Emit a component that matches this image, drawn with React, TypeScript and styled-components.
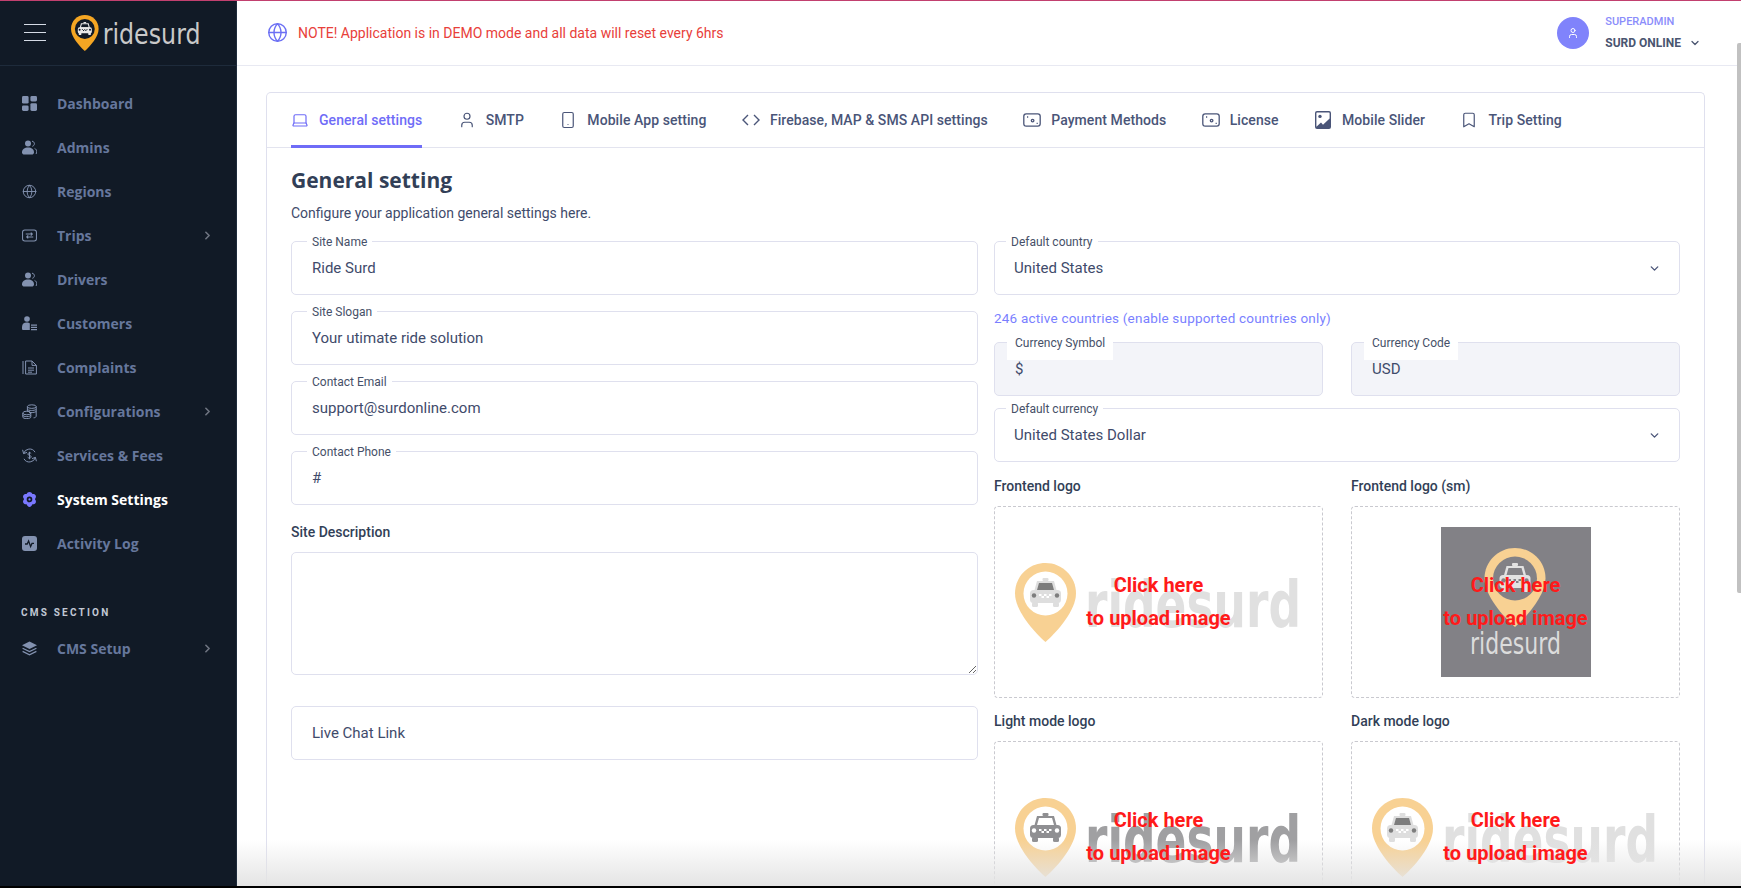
import { FunctionComponent, ReactNode } from "react";
import styled, { createGlobalStyle } from "styled-components";
import {
  Bookmark,
  ChevronDown,
  ChevronRight,
  Globe,
  Laptop,
  Smartphone,
  User,
} from "lucide-react";

const GlobalStyle = createGlobalStyle`
  html, body {
    margin: 0;
    height: 100%;
    overflow: hidden;
    background: #000;
  }
  * {
    box-sizing: border-box;
  }
`;

const Shell = styled.div`
  display: grid;
  grid-template-columns: 237px 1fr;
  height: 886px;
  background: #fff;
  border-top: 1px solid #c2406f;
  font-family: Roboto, "Liberation Sans", sans-serif;
  overflow: hidden;
`;

const Sidebar = styled.aside`
  display: flex;
  flex-direction: column;
  background: #111a26;
  border-right: 1px solid #1e2b3b;
  font-family: "Open Sans", "Noto Sans", sans-serif;
`;

const Brand = styled.div`
  display: flex;
  align-items: center;
  gap: 25px;
  height: 65px;
  padding: 0 0 1px 24px;
  border-bottom: 1px solid #1e2b3b;
`;

const Burger = styled.div`
  display: flex;
  flex-direction: column;
  gap: 6.5px;
  width: 22px;

  span {
    display: block;
    height: 1.5px;
    background: #d5dbe5;
  }
`;

const Nav = styled.nav`
  display: flex;
  flex-direction: column;
  padding-top: 15px;
`;

const NavItem = styled.div<{ $active?: boolean }>`
  display: flex;
  align-items: center;
  height: 44px;
  padding: 0 22px 0 22px;
  gap: 20px;
  font-size: 14px;
  font-weight: 700;
  color: ${(p) => (p.$active ? "#ffffff" : "#66779c")};

  > svg:first-child {
    flex: none;
    width: 15px;
    height: 15px;
    color: ${(p) => (p.$active ? "#7a78ff" : "#8392b0")};
  }
`;

const NavLabel = styled.span`
  flex: 1;
`;

const NavArrow = styled(ChevronRight)`
  width: 13px;
  height: 13px;
  color: #6e7480;
  stroke-width: 3;
`;

const SectionTitle = styled.div`
  padding: 42px 0 3px 21px;
  height: 61px;
  font-family: Roboto, sans-serif;
  font-size: 10px;
  line-height: 12px;
  font-weight: 700;
  letter-spacing: 2.2px;
  color: #c2c8d4;
`;

const Main = styled.main`
  position: relative;
  display: flex;
  flex-direction: column;
  min-width: 0;
  overflow: hidden;
`;

const TopBar = styled.header`
  display: flex;
  align-items: center;
  flex: none;
  height: 65px;
  padding: 0 40px 1px 30px;
  border-bottom: 1px solid #e8e9f2;
`;

const Notice = styled.div`
  display: flex;
  flex: 1;
  align-items: center;
  gap: 10px;
  font-size: 14px;
  color: #e8403a;

  svg {
    width: 21px;
    height: 21px;
    color: #6c70f4;
  }
`;

const Avatar = styled.div`
  display: flex;
  align-items: center;
  justify-content: center;
  width: 32px;
  height: 32px;
  margin-right: 16px;
  border-radius: 50%;
  background: #8083fb;
  color: #fff;

  svg {
    width: 12px;
    height: 12px;
  }
`;

const UserBlock = styled.div`
  display: flex;
  flex-direction: column;
  gap: 8px;
`;

const UserRole = styled.div`
  font-size: 11px;
  line-height: 12px;
  font-weight: 500;
  color: #8b8dfb;
`;

const UserName = styled.div`
  display: flex;
  align-items: center;
  gap: 8px;
  font-size: 12px;
  line-height: 14px;
  font-weight: 700;
  color: #4a5570;

  svg {
    width: 12px;
    height: 12px;
    stroke-width: 2.5;
  }
`;

const Scrollbar = styled.div`
  position: absolute;
  top: 42px;
  right: 0;
  width: 4px;
  height: 550px;
  background: #c1c1c1;
  border-radius: 2px 0 0 2px;
`;

const BottomFade = styled.div`
  position: absolute;
  left: 0;
  right: 0;
  bottom: 0;
  height: 46px;
  background: linear-gradient(rgba(230, 230, 230, 0), #e4e4e4);
  pointer-events: none;
`;

const Content = styled.div`
  flex: 1;
  padding: 26px 36px 0 29px;
`;

const Card = styled.section`
  border: 1px solid #dfe0ee;
  border-bottom: 0;
  border-radius: 5px 5px 0 0;
`;

const Tabs = styled.div`
  display: flex;
  gap: 35.4px;
  height: 55px;
  padding: 0 24px;
  border-bottom: 1px solid #e3e4ef;
`;

const Tab = styled.div<{ $active?: boolean }>`
  display: flex;
  align-items: center;
  gap: 10px;
  height: 55px;
  padding-top: 1px;
  font-size: 14px;
  font-weight: 500;
  letter-spacing: 0.07px;
  white-space: nowrap;
  color: ${(p) => (p.$active ? "#6f6cf7" : "#4a5578")};
  border-bottom: 3px solid ${(p) => (p.$active ? "#6f6cf7" : "transparent")};

  svg {
    flex: none;
    width: 18px;
    height: 18px;
  }
`;

const Body = styled.div`
  padding: 17px 25px 0 24px;
`;

const Heading = styled.h2`
  margin: 0;
  font-family: "Open Sans", sans-serif;
  font-size: 21px;
  line-height: 30px;
  font-weight: 700;
  color: #323f57;
`;

const Intro = styled.p`
  margin: 8px 0 18px;
  font-size: 14px;
  line-height: 20px;
  color: #3f4b6b;
`;

const Columns = styled.div`
  display: grid;
  grid-template-columns: 687px 686px;
  column-gap: 16px;
`;

const Column = styled.div`
  display: flex;
  flex-direction: column;
`;

const FieldStack = styled.div`
  display: flex;
  flex-direction: column;
  gap: 16px;
`;

const Field = styled.div<{ $disabled?: boolean }>`
  position: relative;
  display: flex;
  align-items: center;
  justify-content: space-between;
  height: 54px;
  padding: 0 20px;
  border: 1px solid #dfe0ee;
  border-radius: 5px;
  background: ${(p) => (p.$disabled ? "#f3f4f9" : "#fff")};
  font-size: 15px;
  color: #3f4b6b;
`;

const FieldLabel = styled.span`
  position: absolute;
  top: -7px;
  left: 15px;
  padding: 0 5px;
  background: #fff;
  font-size: 12px;
  line-height: 14px;
  letter-spacing: 0;
  color: #465068;
`;

const BoxedLabel = styled(FieldLabel)`
  left: 12px;
  padding: 0 8px 10px;
`;

const SelectField = styled(Field)`
  padding: 0 18px 0 19px;
`;

const SelectLabel = styled(FieldLabel)`
  left: 11px;
`;

const SelectArrow = styled(ChevronDown)`
  width: 13px;
  height: 13px;
  color: #4a5578;
  stroke-width: 2.5;
`;

const BlockLabel = styled.div<{ $top: number }>`
  margin-top: ${(p) => p.$top}px;
  margin-bottom: 10px;
  font-size: 14px;
  line-height: 20px;
  font-weight: 500;
  color: #323f57;
`;

const TextArea = styled.textarea`
  display: block;
  width: 100%;
  height: 123px;
  margin-bottom: 31px;
  border: 1px solid #dfe0ee;
  border-radius: 5px;
  background: #fff;
  outline: none;
`;

const CountryNote = styled.div`
  margin: 14px 0 15px;
  font-size: 13.5px;
  line-height: 18px;
  letter-spacing: 0.2px;
  color: #7a7fff;
`;

const Pair = styled.div`
  display: grid;
  grid-template-columns: 329px 329px;
  justify-content: space-between;
`;

const CurrencySelect = styled.div`
  margin-top: 12px;
`;

const LogoCell = styled.div`
  display: flex;
  flex-direction: column;
`;

const UploadBox = styled.div`
  position: relative;
  display: flex;
  align-items: center;
  justify-content: center;
  height: 192px;
  border: 1px dashed #c9c9cf;
  border-radius: 4px;
`;

const UploadHint = styled.div`
  position: absolute;
  z-index: 2;
  top: 62px;
  left: 0;
  right: 0;
  text-align: center;
  font-size: 20px;
  line-height: 33px;
  font-weight: 700;
  color: #ff1a1a;
`;

const SmallLogoTile = styled.div`
  display: flex;
  width: 150px;
  height: 150px;
  background: #828186;
`;

const WordMark = styled.text<{ $weight: number }>`
  font-family: "DejaVu Sans", sans-serif;
  font-weight: ${(p) => p.$weight};
`;

type PinColors = {
  pin: string;
  hole: string;
  car: string;
  glass: string;
};

const Pin: FunctionComponent<PinColors> = ({ pin, hole, car, glass }) => (
  <g>
    <path
      d="M30.5 0C47.5 0 61 13.5 61 30.5C61 47 43 68 30.5 79C18 68 0 47 0 30.5C0 13.5 13.5 0 30.5 0Z"
      fill={pin}
    />
    <circle cx="30.5" cy="30.5" r="22" fill={hole} />
    <rect x="27.5" y="15" width="6" height="3" rx="1" fill={car} />
    <path d="M22 18H39L42 29H19Z" fill={car} />
    <path d="M24 20H37L39 27H22Z" fill={glass} />
    <rect x="15" y="27" width="31" height="13" rx="3.5" fill={car} />
    <rect x="17" y="39" width="6" height="5" rx="1.5" fill={car} />
    <rect x="38" y="39" width="6" height="5" rx="1.5" fill={car} />
    <circle cx="19" cy="32.5" r="2.2" fill={glass} />
    <circle cx="42" cy="32.5" r="2.2" fill={glass} />
    <path
      d="M24 31h2.5v2H24zM29 31h2.5v2H29zM34 31h2.5v2H34zM26.5 33H29v2h-2.5zM31.5 33H34v2h-2.5z"
      fill={hole}
    />
  </g>
);

type LogoProps = PinColors & {
  word: string;
  width: number;
  height: number;
  weight?: number;
};

const Logo: FunctionComponent<LogoProps> = ({ word, width, height, weight = 700, ...pin }) => (
  <svg
    width={width}
    height={height}
    viewBox="0 0 287 79"
    fill="none"
    overflow="visible"
  >
    <Pin {...pin} />
    <WordMark
      $weight={weight}
      x="70"
      y="64"
      fontSize="64"
      fill={word}
      textLength="216"
      lengthAdjust="spacingAndGlyphs"
    >
      ridesurd
    </WordMark>
  </svg>
);

const SmallLogo: FunctionComponent = () => (
  <SmallLogoTile>
    <svg
      width="150"
      height="150"
      viewBox="0 0 150 150"
      fill="none"
      overflow="visible"
    >
      <g transform="translate(43.5 21)">
        <Pin
          pin="#f8d193"
          hole="#828186"
          car="#e2e2e2"
          glass="#828186"
        />
      </g>
      <WordMark
        $weight={400}
        x="29"
        y="127"
        fontSize="30"
        fill="#dcdcdc"
        textLength="91"
        lengthAdjust="spacingAndGlyphs"
      >
        ridesurd
      </WordMark>
    </svg>
  </SmallLogoTile>
);

const IconDashboard = () => (
  <svg viewBox="0 0 15 15" fill="currentColor">
    <rect x="0" y="0" width="6.6" height="7.6" rx="1.4" />
    <rect x="8.4" y="0" width="6.6" height="5.4" rx="1.4" />
    <rect x="0" y="9.4" width="6.6" height="5.6" rx="1.4" />
    <rect x="8.4" y="7.2" width="6.6" height="7.8" rx="1.4" />
  </svg>
);

const IconUsers = () => (
  <svg viewBox="0 0 15 15" fill="currentColor">
    <circle cx="6" cy="3.6" r="3" />
    <path d="M0 12.2C0 9 2.6 7.4 6 7.4s6 1.6 6 4.8c0 1.6-1 2.4-2.4 2.4H2.4C1 14.6 0 13.8 0 12.2Z" />
    <path
      d="M10 1.2c1.6.3 2.4 1.3 2.4 2.5S11.6 6 10.4 6.3M12.6 8.4c1.4.6 2.2 1.9 2.2 3.4 0 1-.3 1.7-.9 2.2"
      fill="none"
      stroke="currentColor"
      strokeWidth="1"
    />
  </svg>
);

const IconTrips = () => (
  <svg
    viewBox="0 0 16 15"
    fill="none"
    stroke="currentColor"
    strokeWidth="1.1"
  >
    <rect x="0.6" y="1.6" width="14.8" height="11.8" rx="2.4" />
    <path d="M4 6h7M9.4 4.4 11 6 9.4 7.6M12 9H5M6.6 7.4 5 9l1.6 1.6" />
  </svg>
);

const IconCustomers = () => (
  <svg viewBox="0 0 15 15" fill="currentColor">
    <circle cx="5" cy="3" r="2.8" />
    <path d="M0 11c0-3 2-4.4 4.6-4.4 1.6 0 2.6.4 3.2 1V14H1.4C.5 14 0 13.4 0 12.4Z" />
    <path d="M9 8.6h6v1.2H9zM9 10.8h6V12H9zM9 13h6v1.2H9z" />
  </svg>
);

const IconComplaints = () => (
  <svg
    viewBox="0 0 15 15"
    fill="none"
    stroke="currentColor"
    strokeWidth="1"
  >
    <path d="M1 1v13" />
    <path d="M3.6 14V1h6.4l4.4 4.4V14Z" />
    <path d="M10 1v4.4h4.4M6 8h6M6 10.2h6M6 12.2h4" />
  </svg>
);

const IconCoins = () => (
  <svg
    viewBox="0 0 15 15"
    fill="none"
    stroke="currentColor"
    strokeWidth="1"
  >
    <ellipse cx="9.8" cy="2.6" rx="4.4" ry="1.8" />
    <path d="M5.4 2.6v5M14.2 2.6v9.4c0 1-1 1.8-2.6 1.8" />
    <path d="M5.6 5.6c.8 1 6.6 1.4 8.6-.2M7 8.4c2 .4 5.8.2 7.2-.8" />
    <ellipse cx="4.8" cy="9" rx="4" ry="1.8" />
    <path d="M.8 9v4c0 1 1.6 1.6 4 1.6s4-.6 4-1.6V9M.8 11c0 1 1.6 1.6 4 1.6s4-.6 4-1.6" />
  </svg>
);

const IconServices = () => (
  <svg
    viewBox="0 0 15 15"
    fill="none"
    stroke="currentColor"
    strokeWidth="1"
  >
    <path d="M1.6 5.6A6.2 6.2 0 0 1 13 4.2M.6 1.8l1 3.8 3.4-1.2" />
    <path d="M13.4 9.4A6.2 6.2 0 0 1 2 10.8M14.4 13.2l-1-3.8-3.4 1.2" />
    <path d="M9.2 5.6c-.5-.6-1-.8-1.7-.8-.9 0-1.6.5-1.6 1.3 0 1.8 3.3.9 3.3 2.7 0 .8-.7 1.3-1.7 1.3-.7 0-1.3-.3-1.8-.9M7.5 3.8v7.4" />
  </svg>
);

const IconFlower = () => (
  <svg viewBox="0 0 15 15" fill="currentColor">
    <path
      fillRule="evenodd"
      d="M7.5 0c1.4 0 2.4.9 2.9 2 1.2-.2 2.5.1 3.2 1.3.7 1.2.3 2.5-.5 3.4-.1.3-.1.6 0 .9.8.9 1.2 2.2.5 3.4-.7 1.2-2 1.5-3.2 1.3C9.9 13.4 8.9 15 7.5 15S5.1 13.4 4.6 12.3c-1.2.2-2.5-.1-3.2-1.3-.7-1.2-.3-2.5.5-3.4.1-.3.1-.6 0-.9-.8-.9-1.2-2.2-.5-3.4C2.1 2.1 3.4 1.8 4.6 2 5.1.9 6.1 0 7.5 0Zm0 4.6a2.8 2.8 0 1 0 0 5.6 2.8 2.8 0 0 0 0-5.6Z"
    />
    <circle cx="7.5" cy="7.4" r="1.1" />
  </svg>
);

const IconActivity = () => (
  <svg viewBox="0 0 15 15">
    <rect width="15" height="15" rx="3" fill="currentColor" />
    <path
      d="M3 8h2.2l1.4-3 2 5.6L10 7.4h2"
      fill="none"
      stroke="#111a26"
      strokeWidth="1.3"
    />
  </svg>
);

const IconLayers = () => (
  <svg viewBox="0 0 15 15" fill="currentColor">
    <path d="M7.5.6 15 4.2 7.5 8 0 4.2Z" />
    <path
      d="M.6 7.2l6.9 3.4 6.9-3.4M.6 10.4l6.9 3.5 6.9-3.5"
      fill="none"
      stroke="currentColor"
      strokeWidth="1.2"
    />
  </svg>
);

const IconCode = () => (
  <svg
    viewBox="0 0 18 18"
    fill="none"
    stroke="currentColor"
    strokeWidth="1.4"
  >
    <path d="M6 4 1 9l5 5M12 4l5 5-5 5" />
  </svg>
);

const IconPayment = () => (
  <svg
    viewBox="0 0 18 18"
    fill="none"
    stroke="currentColor"
    strokeWidth="1.3"
  >
    <rect x="0.8" y="2.8" width="16.4" height="12.4" rx="2.4" />
    <circle cx="9.6" cy="9.6" r="1.3" />
    <path d="M4 6h1.2M13.6 12.4h1.2" />
  </svg>
);

const IconImage = () => (
  <svg viewBox="0 0 18 18" fill="currentColor">
    <path
      fillRule="evenodd"
      d="M3 0h12a2 2 0 0 1 2 2v14a2 2 0 0 1-2 2H3a2 2 0 0 1-2-2V2a2 2 0 0 1 2-2Zm0 1.6a.6.6 0 0 0-.6.6v13.6L7 11.4l2 2.4 6.6-6.2V2.2a.6.6 0 0 0-.6-.6Z"
    />
    <circle cx="6" cy="5.4" r="1.7" />
  </svg>
);

type MenuEntry = {
  label: string;
  icon: ReactNode;
  arrow?: boolean;
  active?: boolean;
};

const mainMenu: MenuEntry[] = [
  { label: "Dashboard", icon: <IconDashboard /> },
  { label: "Admins", icon: <IconUsers /> },
  { label: "Regions", icon: <Globe strokeWidth={1.5} /> },
  { label: "Trips", icon: <IconTrips />, arrow: true },
  { label: "Drivers", icon: <IconUsers /> },
  { label: "Customers", icon: <IconCustomers /> },
  { label: "Complaints", icon: <IconComplaints /> },
  { label: "Configurations", icon: <IconCoins />, arrow: true },
  { label: "Services & Fees", icon: <IconServices /> },
  { label: "System Settings", icon: <IconFlower />, active: true },
  { label: "Activity Log", icon: <IconActivity /> },
];

const tabs: { label: string; icon: ReactNode; active?: boolean }[] = [
  { label: "General settings", icon: <Laptop strokeWidth={1.6} />, active: true },
  { label: "SMTP", icon: <User strokeWidth={1.6} /> },
  { label: "Mobile App setting", icon: <Smartphone strokeWidth={1.6} /> },
  { label: "Firebase, MAP & SMS API settings", icon: <IconCode /> },
  { label: "Payment Methods", icon: <IconPayment /> },
  { label: "License", icon: <IconPayment /> },
  { label: "Mobile Slider", icon: <IconImage /> },
  { label: "Trip Setting", icon: <Bookmark strokeWidth={1.6} /> },
];

const leftFields = [
  { label: "Site Name", value: "Ride Surd" },
  { label: "Site Slogan", value: "Your utimate ride solution" },
  { label: "Contact Email", value: "support@surdonline.com" },
  { label: "Contact Phone", value: "#" },
];

const paleCar = { pin: "#f8d193", hole: "#fff", car: "#dedede", glass: "#7d7d7d" };
const darkCar = { pin: "#f8d193", hole: "#fff", car: "#8f8f92", glass: "#fff" };

const UploadLogo: FunctionComponent<{ title: string; top: number; children: ReactNode }> = (props) => (
  <LogoCell>
    <BlockLabel $top={props.top}>{props.title}</BlockLabel>
    <UploadBox>
      {props.children}
      <UploadHint>
        Click here
        <br />
        to upload image
      </UploadHint>
    </UploadBox>
  </LogoCell>
);

export default function App() {
  return (
    <>
      <GlobalStyle />
      <Shell>
        <Sidebar>
          <Brand>
            <Burger>
              <span />
              <span />
              <span />
            </Burger>
            <Logo
              pin="#f5a623"
              hole="#111a26"
              car="#e8e8e8"
              glass="#111a26"
              word="#c9c9c9"
              weight={400}
              width={130}
              height={36}
            />
          </Brand>
          <Nav>
            {mainMenu.map((m) => (
              <NavItem
                key={m.label}
                $active={m.active}
              >
                {m.icon}
                <NavLabel>{m.label}</NavLabel>
                {m.arrow && <NavArrow />}
              </NavItem>
            ))}
            <SectionTitle>CMS SECTION</SectionTitle>
            <NavItem>
              <IconLayers />
              <NavLabel>CMS Setup</NavLabel>
              <NavArrow />
            </NavItem>
          </Nav>
        </Sidebar>
        <Main>
          <TopBar>
            <Notice>
              <Globe strokeWidth={1.6} />
              NOTE! Application is in DEMO mode and all data will reset every 6hrs
            </Notice>
            <Avatar>
              <User strokeWidth={2} />
            </Avatar>
            <UserBlock>
              <UserRole>SUPERADMIN</UserRole>
              <UserName>
                SURD ONLINE
                <ChevronDown />
              </UserName>
            </UserBlock>
          </TopBar>
          <Content>
            <Card>
              <Tabs>
                {tabs.map((t) => (
                  <Tab
                    key={t.label}
                    $active={t.active}
                  >
                    {t.icon}
                    {t.label}
                  </Tab>
                ))}
              </Tabs>
              <Body>
                <Heading>General setting</Heading>
                <Intro>Configure your application general settings here.</Intro>
                <Columns>
                  <Column>
                    <FieldStack>
                      {leftFields.map((f) => (
                        <Field key={f.label}>
                          <FieldLabel>{f.label}</FieldLabel>
                          {f.value}
                        </Field>
                      ))}
                    </FieldStack>
                    <BlockLabel $top={17}>Site Description</BlockLabel>
                    <TextArea />
                    <Field>Live Chat Link</Field>
                  </Column>
                  <Column>
                    <SelectField>
                      <SelectLabel>Default country</SelectLabel>
                      United States
                      <SelectArrow />
                    </SelectField>
                    <CountryNote>246 active countries (enable supported countries only)</CountryNote>
                    <Pair>
                      <Field $disabled>
                        <BoxedLabel>Currency Symbol</BoxedLabel>$
                      </Field>
                      <Field $disabled>
                        <BoxedLabel>Currency Code</BoxedLabel>USD
                      </Field>
                    </Pair>
                    <CurrencySelect>
                      <SelectField>
                        <SelectLabel>Default currency</SelectLabel>
                        United States Dollar
                        <SelectArrow />
                      </SelectField>
                    </CurrencySelect>
                    <Pair>
                      <UploadLogo
                        title="Frontend logo"
                        top={14}
                      >
                        <Logo
                          {...paleCar}
                          word="#e0e0e0"
                          width={287}
                          height={79}
                        />
                      </UploadLogo>
                      <UploadLogo
                        title="Frontend logo (sm)"
                        top={14}
                      >
                        <SmallLogo />
                      </UploadLogo>
                      <UploadLogo
                        title="Light mode logo"
                        top={13}
                      >
                        <Logo
                          {...darkCar}
                          word="#a0a0a2"
                          width={287}
                          height={79}
                        />
                      </UploadLogo>
                      <UploadLogo
                        title="Dark mode logo"
                        top={13}
                      >
                        <Logo
                          {...paleCar}
                          word="#e0e0e0"
                          width={287}
                          height={79}
                        />
                      </UploadLogo>
                    </Pair>
                  </Column>
                </Columns>
              </Body>
            </Card>
          </Content>
          <Scrollbar />
          <BottomFade />
        </Main>
      </Shell>
    </>
  );
}
